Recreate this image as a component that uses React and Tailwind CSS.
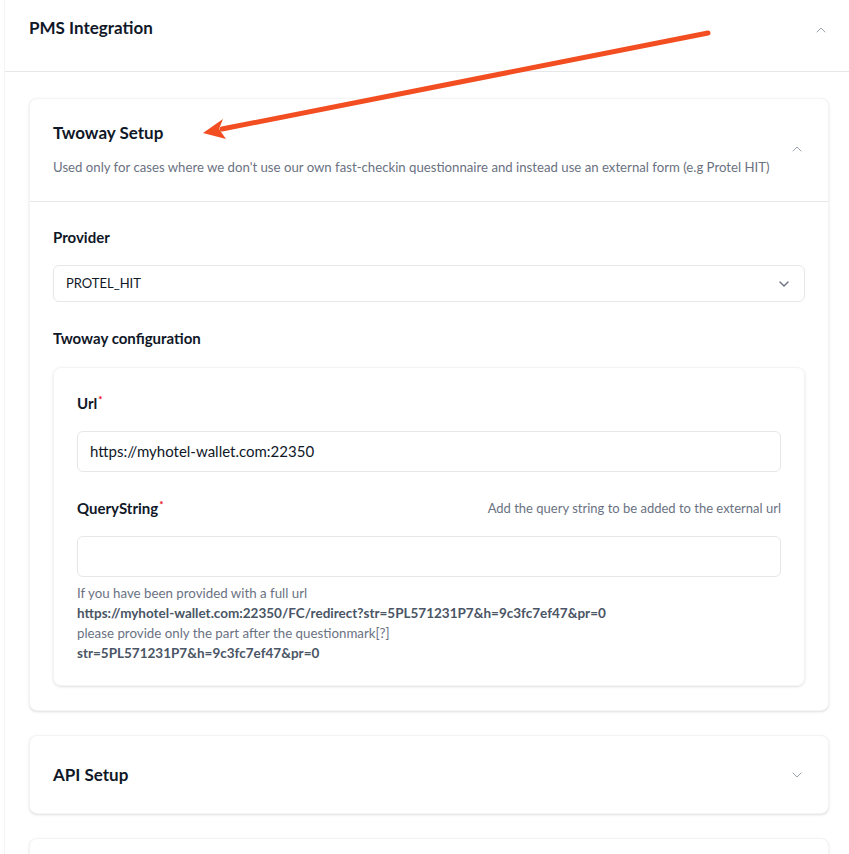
import React from "react";
import { ChevronUp, ChevronDown } from "lucide-react";

const font = { fontFamily: "Lato, 'Noto Sans', sans-serif" };

const Label = ({ children, required }) => (
  <p className="text-[15px] leading-5 font-bold text-gray-900">
    {children}
    {required && <sup className="text-[10px] text-red-600 ml-[1px] -top-[6px]">*</sup>}
  </p>
);

const Arrow = () => (
  <svg className="absolute left-0 top-0 pointer-events-none" width="849" height="200">
    <line x1="708" y1="33" x2="222" y2="129" stroke="#f24e22" strokeWidth="5" strokeLinecap="round" />
    <polygon points="203,133 223,119 219,129 226,139" fill="#f24e22" />
  </svg>
);

export default function App() {
  return (
    <div className="relative w-full overflow-hidden bg-white text-gray-900" style={font}>
      <div className="ml-[4px] w-[849px] border-l border-gray-100 bg-white">
        {/* PMS header */}
        <div className="flex items-start justify-between h-[72px] px-6 pt-[16px] border-b border-gray-200">
          <h2 className="text-[17px] leading-6 font-bold">PMS Integration</h2>
          <ChevronUp className="w-4 h-4 mt-[6px] text-gray-400" strokeWidth={1.5} />
        </div>

        <div className="px-6 pt-[26px] flex flex-col gap-6">
          {/* Twoway setup card */}
          <div className="rounded-lg border border-gray-100 shadow-sm bg-white">
            <div className="flex items-center justify-between px-[23px] pt-[22px] pb-[24px] border-b border-gray-200">
              <div>
                <h3 className="text-[17px] leading-6 font-bold">Twoway Setup</h3>
                <p className="mt-3 text-[13.2px] leading-5 text-gray-500">
                  Used only for cases where we don't use our own fast-checkin questionnaire and instead use an external form (e.g Protel HIT)
                </p>
              </div>
              <ChevronUp className="w-4 h-4 text-gray-400" strokeWidth={1.5} />
            </div>

            <div className="px-[23px] pt-[25px] pb-6">
              <Label>Provider</Label>
              <div className="mt-[18px] h-[37px] flex items-center justify-between rounded-md border border-gray-200 px-3">
                <span className="text-[13px] text-gray-900">PROTEL_HIT</span>
                <ChevronDown className="w-4 h-4 text-gray-500" strokeWidth={2} />
              </div>

              <div className="mt-[26px]">
                <Label>Twoway configuration</Label>
              </div>

              <div className="mt-[19px] rounded-lg border border-gray-100 shadow-sm px-[23px] pt-[25px] pb-[22px]">
                <Label required>Url</Label>
                <div className="mt-[18px] h-[41px] flex items-center rounded-md border border-gray-200 px-3 text-[15px] text-gray-900">
                  https://myhotel-wallet.com:22350
                </div>

                <div className="mt-[26px] flex items-end justify-between">
                  <Label required>QueryString</Label>
                  <span className="text-[13px] leading-5 text-gray-500">Add the query string to be added to the external url</span>
                </div>
                <div className="mt-[18px] h-[41px] rounded-md border border-gray-200" />

                <div className="mt-[6px] text-[13.3px] leading-5 text-gray-500">
                  <p>If you have been provided with a full url</p>
                  <p className="font-bold text-gray-600 text-[13.5px]">https://myhotel-wallet.com:22350/FC/redirect?str=5PL571231P7&amp;h=9c3fc7ef47&amp;pr=0</p>
                  <p>please provide only the part after the questionmark[?]</p>
                  <p className="font-bold text-gray-600 text-[13.5px]">str=5PL571231P7&amp;h=9c3fc7ef47&amp;pr=0</p>
                </div>
              </div>
            </div>
          </div>

          {/* API setup card */}
          <div className="h-[79px] flex items-center justify-between rounded-lg border border-gray-100 shadow-sm bg-white px-[23px]">
            <h3 className="text-[17px] leading-6 font-bold">API Setup</h3>
            <ChevronDown className="w-4 h-4 text-gray-400" strokeWidth={1.5} />
          </div>

          <div className="h-[79px] rounded-lg border border-gray-100 shadow-sm bg-white" />
        </div>
      </div>
      <Arrow />
    </div>
  );
}
